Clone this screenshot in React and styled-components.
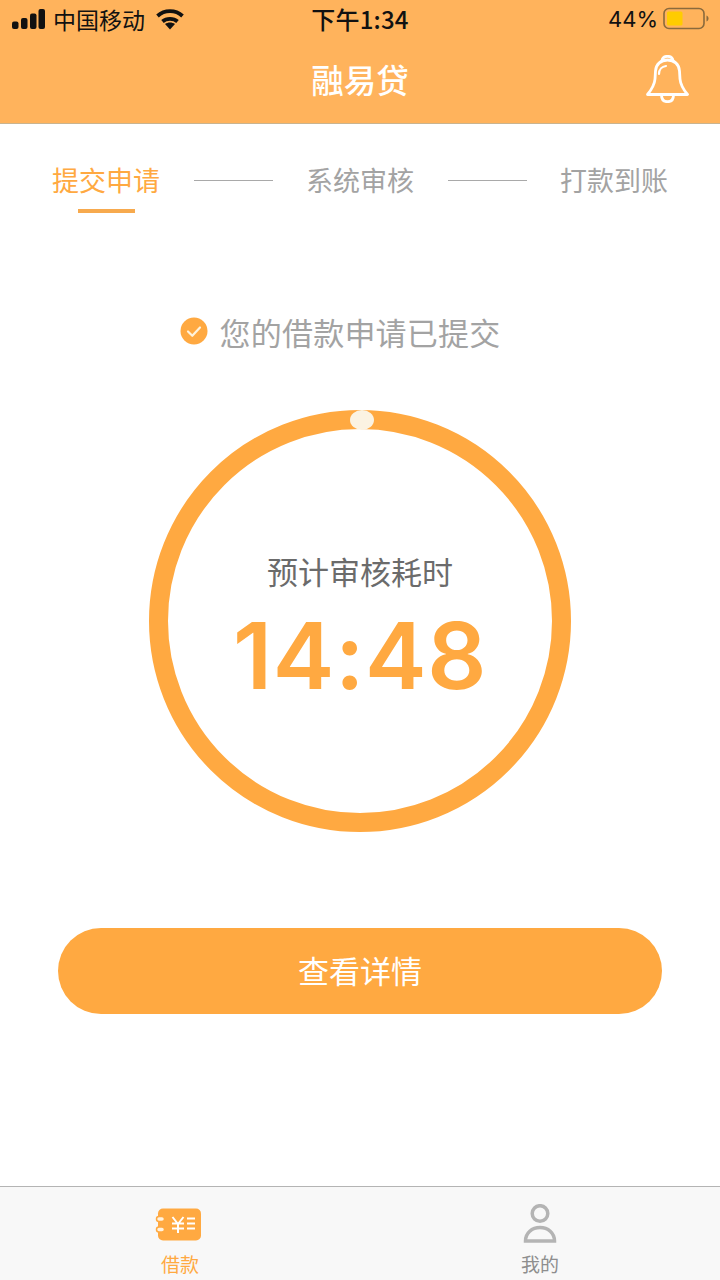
import React from "react";
import styled, { createGlobalStyle } from "styled-components";

const Global = createGlobalStyle`
  html, body { margin: 0; padding: 0; background: #fff; }
  * { box-sizing: border-box; }
  body { font-family: Inter, "Noto Sans CJK SC", sans-serif; }
`;
const Page = styled.div`
  width: 720px; height: 1280px; display: flex; flex-direction: column; background: #fff; overflow: hidden;
`;
const Header = styled.header`
  height: 124px; flex: none; background: #ffb35c; border-bottom: 1px solid #c9b48f; display: flex; flex-direction: column;
`;
const StatusBar = styled.div`
  height: 40px; display: grid; grid-template-columns: 1fr auto 1fr; align-items: center; padding: 0 12px 2px; color: #111;
`;
const StatusLeft = styled.div`display: flex; align-items: center; gap: 8px;`;
const Carrier = styled.span`font-size: 23px; line-height: 38px; font-family: "Noto Sans CJK SC", sans-serif;`;
const Clock = styled.span`font-size: 24px; line-height: 38px; font-weight: 500; font-family: "Noto Sans CJK SC", Inter, sans-serif; letter-spacing: 0.2px;`;
const StatusRight = styled.div`display: flex; align-items: center; justify-content: flex-end; gap: 5px; font-size: 22px; font-family: Inter, sans-serif; margin-right: -1px;`;
const NavBar = styled.div`
  flex: 1; position: relative; display: flex; align-items: center; justify-content: center; padding-bottom: 5px;
`;
const Title = styled.h1`
  margin: 0; font-size: 32.5px; font-weight: 500; color: #fff; font-family: "Noto Sans CJK SC", sans-serif; line-height: 44px;
`;
const BellWrap = styled.div`position: absolute; right: 31px; top: 15px; width: 43px; height: 48px;`;
const Main = styled.main`flex: 1; display: flex; flex-direction: column; align-items: center;`;
const Steps = styled.div`
  width: 100%; display: flex; align-items: flex-start; justify-content: space-between; padding: 36px 52px 0 52px; height: 90px;
`;
const Step = styled.div`
  position: relative; font-size: 27px; line-height: 40px; font-family: "Noto Sans CJK SC", sans-serif;
  color: ${p => (p.$active ? "#ffa941" : "#a3a3a3")};
  ${p => p.$active && `&::after { content: ""; position: absolute; left: 26px; top: 49px; width: 57px; height: 4px; background: #f7aa4e; }`}
`;
const Connector = styled.div`width: 79px; height: 1px; margin-top: 20px; background: #a9a9a9;`;
const Notice = styled.div`
  margin-top: 94px; height: 46px; display: flex; align-items: center; gap: 12px; color: #a3a3a3; font-size: 31px; padding-right: 40px;
  font-family: "Noto Sans CJK SC", sans-serif; letter-spacing: 0.2px;
`;
const Ring = styled.div`
  position: relative; margin-top: 56px; width: 422px; height: 422px; flex: none; border-radius: 50%; border: 19.5px solid #ffa941;
  display: flex; flex-direction: column; align-items: center; padding-top: 120px;
`;
const RingDot = styled.div`
  position: absolute; left: 181.5px; top: -19.5px; width: 24px; height: 20px; border-radius: 50%; background: #fbf3e2;
`;
const RingLabel = styled.div`
  font-size: 31px; line-height: 44px; color: #6b6b6b; font-family: "Noto Sans CJK SC", sans-serif;
`;
const Timer = styled.div`
  font-size: 92.5px; line-height: 100px; font-weight: 600; color: #ffa941; font-family: Inter, sans-serif; margin-top: 12px; letter-spacing: 0.6px;
`;
const Action = styled.button`
  margin-top: 96px; width: 604px; height: 86px; flex: none; border: 0; border-radius: 43px; background: #ffa941; color: #fff; padding: 0 0 3px;
  font-size: 31px; font-family: "Noto Sans CJK SC", sans-serif;
`;
const TabBar = styled.nav`
  height: 94px; flex: none; background: #f8f8f8; border-top: 1px solid #b4b4b4; display: grid; grid-template-columns: 1fr 1fr;
`;
const Tab = styled.div`
  display: flex; flex-direction: column; align-items: center; padding-top: 16px; font-size: 19px; line-height: 28px;
  font-family: "Noto Sans CJK SC", sans-serif; color: ${p => (p.$active ? "#ffa941" : "#8e8e8e")};
`;
const TabIcon = styled.div`
  height: 42px; display: flex; align-items: center; justify-content: center; margin-bottom: 5px;
  margin-right: ${p => (p.$shift ? "4px" : "0")};
`;

const Signal = () => (
  <svg width="33" height="20" viewBox="0 0 33 20" fill="#111">
    <rect x="0" y="12.500" width="6.500" height="7.500" rx="2" />
    <rect x="9" y="9" width="6.500" height="11" rx="2" />
    <rect x="18" y="4.500" width="6.500" height="15.500" rx="2" />
    <rect x="26.500" y="0" width="6.500" height="20" rx="2" />
  </svg>
);
const Wifi = () => (
  <svg width="28" height="22" viewBox="0 0 28 22" fill="none" stroke="#111" strokeWidth="3.800" style={{ marginLeft: 3 }}>
    <path d="M1.500 8C8.500 1.500 19.500 1.500 26.500 8" />
    <path d="M6.500 13.500C10.500 10 17.500 10 21.500 13.500" />
    <path d="M14 21.500L9 16c3-2 7-2 10 0z" fill="#111" stroke="none" />
  </svg>
);
const Battery = () => (
  <svg width="46" height="24" viewBox="0 0 46 24" fill="none">
    <rect x="1" y="1.500" width="40" height="20" rx="5" stroke="#8a6a3c" strokeWidth="1.600" />
    <rect x="4" y="4.500" width="15.500" height="14" rx="1.500" fill="#ffcc00" />
    <path d="M43.500 8.500c1.300.6 2 1.600 2 3s-.7 2.400-2 3z" fill="#8a6a3c" />
  </svg>
);
const Bell = () => (
  <svg width="43" height="48" viewBox="0 0 43 48" fill="none" stroke="#fff" strokeWidth="2.800" strokeLinecap="round" strokeLinejoin="round">
    <path d="M1.500 39.500C6 34 8.500 30 9 24l.5-8C10 9 15 5 21.500 5S33 9 33.500 16l.5 8c.5 6 3 10 7.500 15.500z" />
    <path d="M16 5.500C16.500 2.500 18.500 1.300 21.500 1.300S26.500 2.500 27 5.500" />
    <path d="M15.500 40c0 4.500 2.500 6.700 6 6.700s6-2.200 6-6.700" />
    <path d="M13 19c0-4.500 3-7.500 7-8" strokeWidth="2.200" />
  </svg>
);
const Check = () => (
  <svg width="28" height="28" viewBox="0 0 28 28">
    <circle cx="14" cy="14" r="13.500" fill="#ffa941" />
    <path d="M8 14.500l4.300 4.300L20 10.500" fill="none" stroke="#fff3dc" strokeWidth="2.200" strokeLinecap="round" strokeLinejoin="round" />
  </svg>
);
const LoanIcon = () => (
  <svg width="46" height="33" viewBox="0 0 46 33">
    <rect x="3" y="0.500" width="43" height="32" rx="5" fill="#ffa941" />
    <rect x="1.500" y="8.500" width="8" height="5" rx="2.500" fill="#fff3e0" stroke="#ffa941" strokeWidth="1.500" />
    <rect x="1.500" y="19" width="8" height="5" rx="2.500" fill="#fff3e0" stroke="#ffa941" strokeWidth="1.500" />
    <path d="M17.500 9l5.500 7 5.500-7M23 16v9M17 15.500h12M17 20.500h12" fill="none" stroke="#fff" strokeWidth="2" />
    <path d="M32 10.500h8M32 15.500h8M32 20.500h8" fill="none" stroke="#fff" strokeWidth="2" />
  </svg>
);
const PersonIcon = () => (
  <svg width="34" height="40" viewBox="0 0 34 40" fill="none" stroke="#b4b4b4" strokeWidth="3.500">
    <circle cx="17" cy="9.500" r="7.800" />
    <path d="M2.500 37c0-8 6.500-13.500 14.500-13.500S31.500 29 31.500 37z" />
  </svg>
);

export default function App() {
  return (
    <Page>
      <Global />
      <Header>
        <StatusBar>
          <StatusLeft>
            <Signal />
            <Carrier>中国移动</Carrier>
            <Wifi />
          </StatusLeft>
          <Clock>下午1:34</Clock>
          <StatusRight>
            <span>44%</span>
            <Battery />
          </StatusRight>
        </StatusBar>
        <NavBar>
          <Title>融易贷</Title>
          <BellWrap><Bell /></BellWrap>
        </NavBar>
      </Header>
      <Main>
        <Steps>
          <Step $active>提交申请</Step>
          <Connector />
          <Step>系统审核</Step>
          <Connector />
          <Step>打款到账</Step>
        </Steps>
        <Notice>
          <Check />
          <span>您的借款申请已提交</span>
        </Notice>
        <Ring>
          <RingDot />
          <RingLabel>预计审核耗时</RingLabel>
          <Timer>14:48</Timer>
        </Ring>
        <Action>查看详情</Action>
      </Main>
      <TabBar>
        <Tab $active>
          <TabIcon $shift><LoanIcon /></TabIcon>
          借款
        </Tab>
        <Tab>
          <TabIcon><PersonIcon /></TabIcon>
          我的
        </Tab>
      </TabBar>
    </Page>
  );
}
